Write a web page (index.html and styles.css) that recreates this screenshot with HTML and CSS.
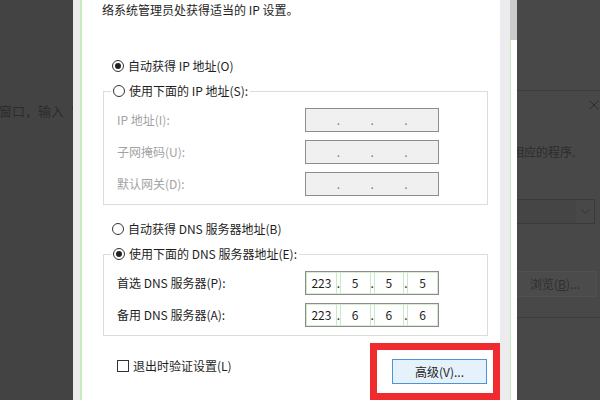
FILE: index.html
```html
<!DOCTYPE html>
<html lang="zh-CN">
<head>
    <meta charset="UTF-8">
    <meta name="viewport" content="width=device-width, initial-scale=1.0">
    <title>Internet 协议版本 4 (TCP/IPv4) 属性</title>
    <link rel="stylesheet" href="styles.css">
</head>
<body>
    <div class="screen">
        <!-- 背后的窗口（左侧） -->
        <div class="backdrop backdrop-left">
            <p class="bg-text-left">窗口，输入“</p>
        </div>

        <div class="dialog">
            <div class="frame-left"></div>

            <div class="dialog-body">
                <p class="intro">络系统管理员处获得适当的 IP 设置。</p>

                <label class="radio-row first-radio"><span class="radio checked"></span>自动获得 IP 地址(O)</label>

                <fieldset class="group">
                    <legend><span class="legend-row"><span class="radio"></span>使用下面的 IP 地址(S):</span></legend>
                    <div class="field-grid disabled">
                        <span class="field-label">IP 地址(I):</span>
                        <div class="ip-box empty">
                            <span class="seg"></span><span class="dot">.</span><span class="seg"></span><span class="dot">.</span><span class="seg"></span><span class="dot">.</span><span class="seg"></span>
                        </div>
                        <span class="field-label">子网掩码(U):</span>
                        <div class="ip-box empty">
                            <span class="seg"></span><span class="dot">.</span><span class="seg"></span><span class="dot">.</span><span class="seg"></span><span class="dot">.</span><span class="seg"></span>
                        </div>
                        <span class="field-label">默认网关(D):</span>
                        <div class="ip-box empty">
                            <span class="seg"></span><span class="dot">.</span><span class="seg"></span><span class="dot">.</span><span class="seg"></span><span class="dot">.</span><span class="seg"></span>
                        </div>
                    </div>
                </fieldset>

                <label class="radio-row dns-auto"><span class="radio"></span>自动获得 DNS 服务器地址(B)</label>

                <fieldset class="group">
                    <legend><span class="legend-row"><span class="radio checked"></span>使用下面的 DNS 服务器地址(E):</span></legend>
                    <div class="field-grid">
                        <span class="field-label">首选 DNS 服务器(P):</span>
                        <div class="ip-box filled">
                            <span class="seg">223</span><span class="dot">.</span><span class="seg">5</span><span class="dot">.</span><span class="seg">5</span><span class="dot">.</span><span class="seg">5</span>
                        </div>
                        <span class="field-label">备用 DNS 服务器(A):</span>
                        <div class="ip-box filled">
                            <span class="seg">223</span><span class="dot">.</span><span class="seg">6</span><span class="dot">.</span><span class="seg">6</span><span class="dot">.</span><span class="seg">6</span>
                        </div>
                    </div>
                </fieldset>

                <div class="footer">
                    <label class="check-row"><span class="checkbox"></span>退出时验证设置(L)</label>
                    <button class="btn-advanced">高级(V)...</button>
                </div>

                <!-- 红色标注框 -->
                <div class="highlight"></div>
            </div>

            <div class="frame-right">
                <div class="frame-gutter"></div>
                <div class="frame-rail"><div class="frame-thumb"></div></div>
            </div>
        </div>

        <!-- 背后的窗口（右侧） -->
        <div class="backdrop backdrop-right">
            <div class="bg-header"></div>
            <svg class="bg-close" width="10" height="10" viewBox="0 0 10 10">
                <path d="M0.5 0.5 L9.5 9.5 M9.5 0.5 L0.5 9.5" stroke="#2c2c2c" stroke-width="1" fill="none"/>
            </svg>
            <p class="bg-text-right">相应的程序.</p>
            <div class="bg-select">
                <div class="bg-select-value"></div>
                <div class="bg-select-arrow">
                    <svg width="9" height="6" viewBox="0 0 9 6">
                        <path d="M0.5 0.5 L4.5 4.5 L8.5 0.5" stroke="#333" stroke-width="1" fill="none"/>
                    </svg>
                </div>
            </div>
            <div class="bg-button">浏览(<u>B</u>)...</div>
            <div class="bg-rule"></div>
        </div>
    </div>
</body>
</html>
```

FILE: styles.css
```css
body {
    margin: 0;
    font-family: "Noto Sans CJK SC", "Liberation Sans", sans-serif;
    font-size: 12px;
    line-height: 16px;
    color: #1e1e1e;
}

.screen {
    display: flex;
    width: 600px;
    height: 400px;
    overflow: hidden;
}

/* 背后的窗口 */
.backdrop {
    height: 400px;
    overflow: hidden;
    color: #2c2c2c;
}

.backdrop-left {
    width: 73px;
    background: #434343;
}

.bg-text-left {
    margin: 104px 0 0 -1px;
    font-size: 13px;
    line-height: 14px;
    white-space: nowrap;
}

.backdrop-right {
    width: 83px;
    background: #484848;
}

.bg-header {
    height: 90px;
    border-bottom: 1px solid #3d3d3d;
}

.bg-close {
    display: block;
    margin: 9px 0 0 72px;
}

.bg-text-right {
    margin: 34px 0 0 -5px;
    line-height: 16px;
    white-space: nowrap;
}

.bg-select {
    display: flex;
    width: 88px;
    height: 25px;
    margin: 39px 0 0 -10px;
    border: 1px solid #3a3a3a;
    box-sizing: border-box;
}

.bg-select-value {
    flex: 1;
    background: #454545;
}

.bg-select-arrow {
    width: 18px;
    display: flex;
    align-items: center;
    justify-content: center;
}

.bg-button {
    width: 90px;
    height: 26px;
    margin: 47px 0 0 -10px;
    padding-left: 22px;
    box-sizing: border-box;
    border: 1px solid #505050;
    background: #4b4b4b;
    line-height: 24px;
    color: #2f2f2f;
    white-space: nowrap;
}

.bg-rule {
    margin-top: 20px;
    border-top: 1px solid #3d3d3d;
}

/* 对话框 */
.dialog {
    display: flex;
    width: 444px;
    height: 400px;
}

.frame-left {
    width: 7px;
    background: #ebebeb;
    border-right: 2px solid #c7eabf;
}

.dialog-body {
    position: relative;
    flex: 1;
    background: #fff;
}

.frame-right {
    display: flex;
    width: 17px;
}

.frame-gutter {
    width: 10px;
    background: #ececee;
}

.frame-rail {
    flex: 1;
    border-left: 1px solid #c7eabf;
    background: #fff;
}

.frame-thumb {
    height: 40px;
    margin-left: -1px;
    background: #cbcbcb;
}

.intro {
    margin: 2px 0 0 20px;
}

.radio-row,
.check-row,
.legend-row {
    display: flex;
    align-items: center;
    white-space: nowrap;
}

.radio-row {
    margin-left: 30px;
}

.first-radio {
    margin-top: 40px;
}

.dns-auto {
    margin-top: 16px;
}

.radio {
    position: relative;
    width: 12px;
    height: 12px;
    margin-right: 4px;
    border: 1px solid #333;
    border-radius: 50%;
    box-sizing: border-box;
    background: #fff;
}

.radio.checked::after {
    content: "";
    position: absolute;
    left: 2px;
    top: 2px;
    width: 6px;
    height: 6px;
    border-radius: 50%;
    background: #222;
}

.group {
    margin: 9px 12px 0 21px;
    padding: 0;
    min-width: 0;
    border: 1px solid #dcdcdc;
}

.group legend {
    display: block;
    margin-left: 7px;
    padding: 0 2px;
    line-height: 16px;
}

.field-grid {
    display: grid;
    grid-template-columns: 188px 134px;
    grid-auto-rows: 24px;
    row-gap: 8px;
    align-items: center;
    padding: 9px 0 8px 13px;
}

.field-grid.disabled .field-label {
    color: #a3a3a3;
}

.ip-box {
    display: flex;
    height: 24px;
    border: 1px solid #8c8c8c;
    box-sizing: border-box;
    line-height: 22px;
}

.ip-box.empty {
    background: #f0f0f0;
    color: #808080;
}

.ip-box.filled {
    background: #fff;
    box-shadow: inset 0 0 0 1px #d8edd4;
}

.seg {
    flex: 1;
    text-align: center;
}

.ip-box.filled .seg {
    border-left: 1px solid #cde7c9;
    border-right: 1px solid #cde7c9;
}

.dot {
    width: 3px;
    text-align: center;
}

.footer {
    display: flex;
    justify-content: space-between;
    align-items: flex-start;
    margin: 22px 13px 0 35px;
}

.checkbox {
    width: 12px;
    height: 12px;
    margin-right: 4px;
    border: 1px solid #333;
    box-sizing: border-box;
    background: #fff;
}

.btn-advanced {
    width: 95px;
    height: 25px;
    margin-top: 1px;
    border: 1px solid #4a94dc;
    background: #e5f1fb;
    font-family: inherit;
    font-size: 12px;
    color: #1e1e1e;
    padding: 0;
}

.highlight {
    position: absolute;
    left: 288px;
    top: 343px;
    width: 130px;
    height: 57px;
    border: 7px solid #ef2b2f;
    box-sizing: border-box;
}
```
